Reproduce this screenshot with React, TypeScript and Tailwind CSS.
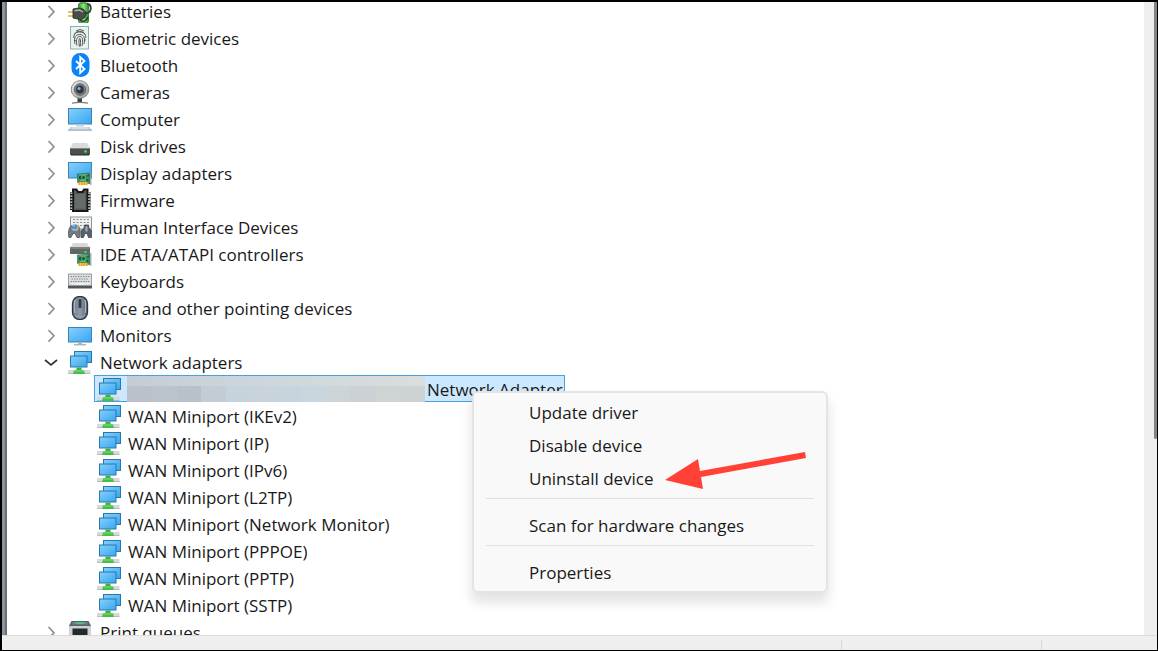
import type { ReactNode } from "react";

type IconName =
  | "battery" | "fingerprint" | "bluetooth" | "camera" | "computer" | "disk" | "display"
  | "chip" | "hid" | "ide" | "keyboard" | "mouse" | "monitor" | "network" | "printer";

const board = (
  <g>
    <path d="M9.5 13l12.500-1v10.500l-12.500-1z" fill="#3a9563" stroke="#1f6a45" strokeWidth=".6" />
    <path d="M11 15h2.500v3h-2.500zM18.500 13.500h2.500v2h-2.500zM18.500 18h2v2h-2z" fill="#17563a" />
    <path d="M11 13.800h9M12 19.500h6" stroke="#86c9a0" strokeWidth=".6" />
    <circle cx="15.500" cy="16.500" r="2" fill="#174f38" stroke="#7fd08f" strokeWidth=".7" />
    <path d="M10.500 21h9v3h-9z" fill="#f2a51d" />
    <path d="M12.500 21v3M15 21v3M17.500 21v3" stroke="#fbd56b" strokeWidth=".7" />
    <path d="M22.800 11v13" stroke="#9aa4a9" strokeWidth="1.200" />
  </g>
);

const art: Record<IconName, ReactNode> = {
  battery: (
    <g>
      <rect x="12" y="2" width="6" height="3" fill="#a4a9a8" />
      <rect x="10.500" y="4" width="10" height="20" rx="2" fill="url(#battery)" stroke="#1c7a26" strokeWidth=".8" />
      <path d="M19 5c5 0 5 8 0 9h-3" fill="none" stroke="#3a403b" strokeWidth="1.900" />
      <path d="M0 13h6M0 17h6" stroke="#d9b429" strokeWidth="1.700" />
      <path d="M5 10l5.500-1c5 0 7.500 3 7.500 6s-2.500 5.500-6.500 5.500L5 19z" fill="#494d47" stroke="#242824" strokeWidth=".8" />
      <path d="M6.500 11.800l5-.8 3.500 2" fill="none" stroke="#b3b8ae" strokeWidth="1.400" />
      <path d="M12 21c3 2.500 6 1.500 8-3" fill="none" stroke="#2d332e" strokeWidth="1.500" />
    </g>
  ),
  fingerprint: (
    <g>
      <rect x="2.500" y=".5" width="18" height="22.500" fill="#eaf1ef" stroke="#8fafa9" />
      <g fill="none" stroke="#4b504f" strokeWidth=".95">
        <path d="M8 5q4-3 8 0M6.500 8.500c1.500-4 9-4 10.500 0M5.800 12c0-5 2-6 6-6s6 2 6 6M7 18c-1-4-1-9.500 4.800-9.500 5.200 0 5.200 5.500 4.200 9.500" />
        <path d="M9 19.500c-1-4-1-9 2.800-9 3.400 0 3.200 5 2.200 9.500M11.500 20.500c-.8-4-.8-8 .2-8 1 0 1 4 .5 8M6 15l2-.5M16 14h2" />
      </g>
    </g>
  ),
  bluetooth: (
    <g>
      <rect x="3.500" y="0" width="18" height="24" rx="8.500" fill="#0a84fb" />
      <path d="M8 8l8.500 8-4.300 4V4l4.300 4L8 16" fill="none" stroke="#fff" strokeWidth="1.800" />
    </g>
  ),
  camera: (
    <g>
      <path d="M9.500 17h4.500v5h-4.500z" fill="#3c3f40" />
      <path d="M4 23.200q8-1.500 16 0" fill="none" stroke="#777d7f" strokeWidth="1.300" />
      <circle cx="12" cy="9.500" r="8.800" fill="url(#metal)" stroke="#858989" />
      <circle cx="12" cy="9.500" r="5.800" fill="#7c8286" stroke="#4d5254" strokeWidth=".8" />
      <circle cx="12" cy="9.500" r="3.900" fill="#2c3a4a" />
      <circle cx="11" cy="8.500" r="1.600" fill="#92adcb" />
    </g>
  ),
  computer: (
    <g>
      <rect x=".5" y="1.500" width="23" height="15.500" fill="url(#screen)" stroke="#3a86b2" />
      <path d="M8 17.500h8v2H8z" fill="#c6d2da" />
      <path d="M2.500 20h19l2.500 3H0z" fill="#c8d4dc" />
      <path d="M0 23.200h24" stroke="#8fa4b4" />
      <path d="M4 21h16" stroke="#eef4f8" strokeWidth=".7" />
    </g>
  ),
  disk: (
    <g>
      <path d="M5 9h14l3 5H2z" fill="#dadcdc" />
      <rect x="2" y="14" width="20" height="7" rx=".8" fill="#4b4f4f" />
      <path d="M2.500 14.500h19" stroke="#818686" />
      <circle cx="17.500" cy="17.500" r="1.300" fill="#36ef4c" />
      <path d="M3 21h18" stroke="#272a2a" />
    </g>
  ),
  display: (
    <g>
      <rect x=".5" y="1.500" width="23" height="15.500" fill="url(#screen)" stroke="#3a86b2" />
      {board}
    </g>
  ),
  chip: (
    <g>
      <path d="M5 1.500h3.500l1.500 2.500h4.500l1.500-2.500h3.500v21.500H5z" fill="#575a5b" stroke="#161616" strokeWidth="2" />
      <path d="M3.500 4v18M21 4v18" stroke="#1d1d1d" strokeWidth="3" />
      <path d="M3.300 4.500v17M21.200 4.500v17" stroke="#f1f1f1" strokeWidth="2" strokeDasharray="1.300 1.700" />
      <path d="M7 6h10.500v14.500H7z" fill="#686b6c" />
    </g>
  ),
  hid: (
    <g>
      <rect x="2.500" y="2" width="21" height="12" fill="#eef0f1" stroke="#8f9598" />
      <path d="M5 4.500h16M5 7.500h16M5 10.500h16" stroke="#8a9094" strokeWidth="1.200" strokeDasharray="2 1.500" />
      <path d="M1 22.500c-1.500-4 0-11 2.500-12h6c3 1 3 8 2 12h-2.500l-2-4h-2l-2 4z" fill="#727b84" stroke="#505960" strokeWidth=".8" />
      <circle cx="7" cy="12.500" r="3.500" fill="#a4b6c6" />
      <path d="M3.500 12.500h3.500M8 10v4" stroke="#338bd2" strokeWidth="1.800" />
      <circle cx="9.500" cy="13" r="1.200" fill="#ef9d2b" />
      <path d="M13 22.500v-7l3-2 .5-3.500h4l.5 3.500 2.500 1.500v7.500h-3l-1.500-4h-2l-1.500 4z" fill="#59616a" stroke="#414950" strokeWidth=".8" />
      <path d="M17.500 11.500h2v5h-2z" fill="#a8b1b8" />
    </g>
  ),
  ide: (
    <g>
      <path d="M5 1h14l3 5H2z" fill="#d8dada" />
      <rect x="2" y="5" width="20" height="7" rx=".8" fill="#626665" />
      <path d="M2.500 6h19" stroke="#969a99" />
      {board}
      <circle cx="17.500" cy="10" r="1.200" fill="#39e64a" />
    </g>
  ),
  keyboard: (
    <g>
      <rect x=".5" y="5" width="23" height="13" fill="#dcdfe0" stroke="#9b9fa1" />
      <path d="M2.500 7.500h19M3.500 10h17M2.500 12.500h19" stroke="#868c8f" strokeWidth="1.200" strokeDasharray="1.500 1" />
      <path d="M4 14.800h2M7 14.800h10M18 14.800h2.500" stroke="#f8f8f8" strokeWidth="1.200" />
      <path d="M0 16.500h24v3H0z" fill="#50585d" />
    </g>
  ),
  mouse: (
    <g>
      <rect x="4.500" y=".5" width="15" height="23" rx="7" fill="url(#mouse)" stroke="#30363d" strokeWidth="1.300" />
      <path d="M7 4q-1.500 7 0 13M17 4q1.500 7 0 13" fill="none" stroke="#b8c2ce" />
      <rect x="10.500" y="3" width="3" height="9" rx="1" fill="#333c47" />
      <path d="M7 19q5 4 10 0" fill="none" stroke="#9ca9b7" />
    </g>
  ),
  monitor: (
    <g>
      <rect x=".5" y="4.500" width="23" height="14.500" fill="url(#screen)" stroke="#3a86b2" />
      <path d="M10 19.500h4v1.500h-4z" fill="#a9b7c1" />
      <path d="M6 21.800h12" stroke="#8796a0" />
    </g>
  ),
  network: (
    <g>
      <rect x="6.500" y="1.500" width="17" height="11" fill="url(#screen)" stroke="#2878a8" />
      <rect x="2.500" y="6" width="16.500" height="11" fill="url(#screen)" stroke="#2878a8" />
      <path d="M0 20h22.500v3.500H0z" fill="#d6dadb" />
      <path d="M0 23.500h22.500" stroke="#a9aeb0" strokeWidth=".8" />
      <path d="M8.500 17.500h5v3h-5z" fill="#45aa4c" />
      <path d="M6 20.500q5-2 10 0l1 3.500H5z" fill="#46bf48" />
      <path d="M6.500 21h9" stroke="#80df76" />
    </g>
  ),
  printer: (
    <g>
      <path d="M3.500 1h17l2.500 5v17H1V6z" fill="#596267" />
      <path d="M5 2h14l1 2.500H4z" fill="#718089" />
      <path d="M8 3h8" stroke="#45d373" strokeWidth="1.600" />
      <rect x="1" y="6" width="22" height="15" rx="1" fill="#ccd1d3" />
      <path d="M4.500 8.500h15V20h-15z" fill="#24292c" />
    </g>
  ),
};

function Icon({ name }: { name: IconName }) {
  return (
    <svg viewBox="0 0 24 24" className="size-6 shrink-0" aria-hidden="true">
      {art[name]}
    </svg>
  );
}

function Gradients() {
  return (
    <svg className="absolute size-0" aria-hidden="true">
      <defs>
        <linearGradient id="screen" x1="0" y1="0" x2="1" y2="1">
          <stop offset="0" stopColor="#86d0fb" />
          <stop offset="1" stopColor="#38a5f3" />
        </linearGradient>
        <linearGradient id="battery">
          <stop offset="0" stopColor="#2fa634" />
          <stop offset=".5" stopColor="#8be67f" />
          <stop offset="1" stopColor="#23912b" />
        </linearGradient>
        <linearGradient id="metal" x1="0" y1="0" x2="1" y2="1">
          <stop offset="0" stopColor="#f1f1f0" />
          <stop offset="1" stopColor="#929696" />
        </linearGradient>
        <linearGradient id="mouse">
          <stop offset="0" stopColor="#6b7889" />
          <stop offset=".5" stopColor="#8d9bac" />
          <stop offset="1" stopColor="#566272" />
        </linearGradient>
      </defs>
    </svg>
  );
}

const categories: { label: string; icon: IconName }[] = [
  { label: "Batteries", icon: "battery" },
  { label: "Biometric devices", icon: "fingerprint" },
  { label: "Bluetooth", icon: "bluetooth" },
  { label: "Cameras", icon: "camera" },
  { label: "Computer", icon: "computer" },
  { label: "Disk drives", icon: "disk" },
  { label: "Display adapters", icon: "display" },
  { label: "Firmware", icon: "chip" },
  { label: "Human Interface Devices", icon: "hid" },
  { label: "IDE ATA/ATAPI controllers", icon: "ide" },
  { label: "Keyboards", icon: "keyboard" },
  { label: "Mice and other pointing devices", icon: "mouse" },
  { label: "Monitors", icon: "monitor" },
];

const miniports = ["IKEv2", "IP", "IPv6", "L2TP", "Network Monitor", "PPPOE", "PPTP", "SSTP"];

function CategoryRow({ label, icon, open = false }: { label: string; icon: IconName; open?: boolean }) {
  return (
    <div className="flex h-[27px] items-center pl-[37px]">
      <button type="button" aria-label={label} aria-expanded={open} className="flex h-6 w-6 items-center">
        <svg viewBox="0 0 14 14" className="size-[14px]" fill="none" strokeWidth="1.7" aria-hidden="true">
          {open ? <path d="M1 5l6 5 6-5" stroke="#333" /> : <path d="M4.500 2l5.500 5.800-5.500 5.800" stroke="#929292" />}
        </svg>
      </button>
      <Icon name={icon} />
      <span className="pt-0.5 pl-2">{label}</span>
    </div>
  );
}

function MenuItem({ children }: { children: ReactNode }) {
  return (
    <button type="button" role="menuitem" className="block h-[33px] w-full pl-[55px] text-left">
      {children}
    </button>
  );
}

function ContextMenu() {
  return (
    <div
      role="menu"
      className="absolute top-4 left-[378px] z-10 w-[356px] rounded-md border-2 border-[#e4e4e4] bg-[#f9f9f9] pt-[3px] pb-0.5 shadow-[0_9px_12px_1px_rgba(0,0,0,0.11)]"
    >
      <MenuItem>Update driver</MenuItem>
      <MenuItem>Disable device</MenuItem>
      <MenuItem>Uninstall device</MenuItem>
      <hr className="mx-3 mt-[3px] mb-[10px] border-[#e1e1e1]" />
      <MenuItem>Scan for hardware changes</MenuItem>
      <hr className="mx-3 mt-[3px] mb-[10px] border-[#e1e1e1]" />
      <MenuItem>Properties</MenuItem>
      <svg viewBox="0 0 142 38" className="absolute top-[59px] left-[191px] h-[38px] w-[142px]" aria-hidden="true">
        <path d="M0 28L33 7l2 12L140 0l1 6L36 25l2 12z" fill="#ff4136" />
      </svg>
    </div>
  );
}

function HiddenName() {
  return (
    <div className="ml-1.5 flex h-[26px] w-[298px] flex-col self-start">
      <div className="h-[10px] bg-linear-to-r from-[#c6ccd3] via-[#cfd7dc] to-[#d9dedd]" />
      <div className="flex flex-1">
        <div className="flex-1 bg-[#bac1ca]" />
        <div className="flex-1 bg-[#bcc4cb]" />
        <div className="flex-1 bg-[#b8c0c9]" />
        <div className="flex-1 bg-[#c3ccd3]" />
        <div className="flex-1 bg-[#c6d3dc]" />
        <div className="flex-1 bg-[#c8d3da]" />
        <div className="flex-1 bg-[#c6d4de]" />
        <div className="flex-1 bg-[#cad6dd]" />
        <div className="flex-1 bg-[#ccd4d8]" />
        <div className="flex-1 bg-[#cbd1d4]" />
        <div className="flex-1 bg-[#ced3d4]" />
        <div className="flex-1 bg-[#cdd3d5]" />
      </div>
    </div>
  );
}

export default function App() {
  return (
    <div className="flex h-screen flex-col overflow-hidden border-t-2 border-r border-b border-l-2 border-black bg-[#efefef] font-['Open_Sans','Noto_Sans',sans-serif] text-[17px] text-[#191919]">
      <Gradients />
      <div className="flex min-h-0 flex-1">
        <div className="w-[5px] shrink-0 border-r-2 border-[#67717a] bg-[#8a939c]" />
        <main className="min-w-0 flex-1 overflow-hidden bg-white">
          <ul className="-mt-[5px] leading-[27px]">
            {categories.map((c) => (
              <li key={c.label}>
                <CategoryRow label={c.label} icon={c.icon} />
              </li>
            ))}
            <li>
              <CategoryRow label="Network adapters" icon="network" open />
              <ul className="pl-[87px]">
                <li className="relative">
                  <div className="flex h-[27px] w-[471px] items-center border border-[#4aa0dc] bg-[#cce8ff] pl-0.5">
                    <Icon name="network" />
                    <HiddenName />
                    <span className="pt-0.5 pl-0.5 whitespace-nowrap">Network Adapter</span>
                  </div>
                  <ContextMenu />
                </li>
                {miniports.map((m) => (
                  <li key={m} className="flex h-[27px] items-center pl-[3px]">
                    <Icon name="network" />
                    <span className="pt-0.5 pl-[7px]">WAN Miniport ({m})</span>
                  </li>
                ))}
              </ul>
            </li>
            <li>
              <CategoryRow label="Print queues" icon="printer" />
            </li>
          </ul>
        </main>
        <div className="flex w-[13px] shrink-0 justify-end bg-[#efefef]">
          <div className="h-[69%] w-[3px] rounded-b-xs bg-[#858585]" />
        </div>
      </div>
      <footer className="flex h-[15px] shrink-0 border-t border-[#dcdcdc] pt-1">
        <div className="flex-1 border-r border-[#d8d8d8]" />
        <div className="w-[200px] border-r border-[#d8d8d8]" />
        <div className="w-[115px]" />
      </footer>
    </div>
  );
}
